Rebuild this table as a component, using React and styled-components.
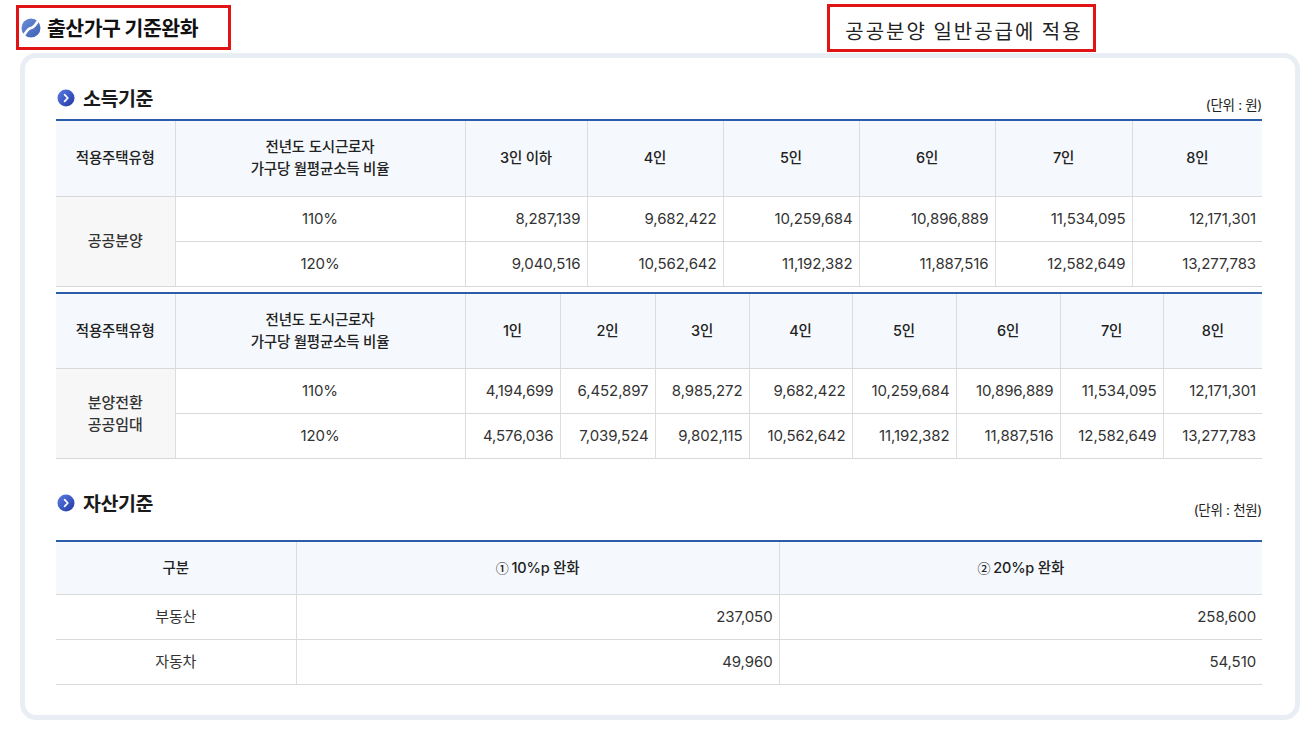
import React from "react";
import styled, { createGlobalStyle } from "styled-components";

const Global = createGlobalStyle`
  html, body { margin: 0; padding: 0; background: #fff; }
  body { font-family: "Inter", "Noto Sans CJK KR", sans-serif; color: #222; }
  * { box-sizing: border-box; }
`;

const Page = styled.div`
  width: 1313px;
  height: 731px;
  overflow: hidden;
`;

const TopBar = styled.div`
  display: flex;
  align-items: flex-start;
  height: 53px;
  padding-left: 16px;
`;

const TitleBox = styled.div`
  margin-top: 5px;
  width: 215px;
  height: 45px;
  border: 3px solid #e01414;
  display: flex;
  align-items: center;
  gap: 6px;
  padding-left: 2px;
`;

const TitleText = styled.h1`
  margin: 0;
  font-family: "Noto Sans CJK KR", sans-serif;
  font-size: 20.5px;
  font-weight: 700;
  letter-spacing: -0.5px;
  color: #111;
  line-height: 26px;
  padding-bottom: 2px;
`;

const NoteBox = styled.div`
  margin-top: 4px;
  margin-left: 596px;
  width: 269px;
  height: 48px;
  border: 3px solid #e01414;
  display: flex;
  align-items: center;
  justify-content: center;
  padding-top: 5px;
  padding-left: 5px;
  font-family: "Noto Sans CJK KR", sans-serif;
  font-size: 20px;
  font-weight: 400;
  letter-spacing: 2px;
  color: #222;
`;

const Card = styled.div`
  margin-left: 20px;
  width: 1280px;
  height: 667px;
  border: 5px solid #e9edf4;
  border-radius: 16px;
  background: #fff;
  padding: 28px 33px 31px 31px;
`;

const SectionHead = styled.div`
  display: flex;
  justify-content: space-between;
  align-items: flex-start;
  height: 28px;
  margin-top: ${(p) => p.$mt || 0}px;
  margin-bottom: ${(p) => p.$mb || 0}px;
`;

const SectionTitle = styled.h2`
  margin: 0;
  display: flex;
  align-items: center;
  gap: 8px;
  font-family: "Noto Sans CJK KR", sans-serif;
  font-size: 19.5px;
  font-weight: 700;
  letter-spacing: -0.4px;
  line-height: 24px;
  color: #1a1a1a;
  margin-left: 1px;
`;

const Unit = styled.span`
  margin-top: 10px;
  font-size: 13.5px;
  line-height: 18px;
  color: #222;
  letter-spacing: -0.3px;
`;

const Table = styled.table`
  width: 1206px;
  table-layout: fixed;
  border-collapse: collapse;
  border-top: 2px solid #2b5dab;
  margin-top: ${(p) => p.$mt || 0}px;
`;

const Th = styled.th`
  height: ${(p) => p.$h || 76}px;
  background: #f5f9fd;
  font-size: 14.5px;
  font-weight: 500;
  color: #222;
  line-height: 22px;
  text-align: center;
  border-bottom: 1px solid #d9d9d9;
  border-right: 1px solid #dddddd;
  padding: 0 4px;
  letter-spacing: -0.2px;
  &:last-child { border-right: none; }
`;

const Td = styled.td`
  height: 45px;
  font-size: 15px;
  color: #333;
  text-align: ${(p) => p.$align || "right"};
  padding: 0 ${(p) => (p.$align === "center" ? 4 : 6)}px 0 4px;
  border-bottom: 1px solid #d9d9d9;
  border-right: 1px solid #dddddd;
  background: ${(p) => (p.$gray ? "#f7f7f7" : "#fff")};
  line-height: 22px;
  letter-spacing: -0.1px;
  font-weight: ${(p) => (p.$head ? 500 : 400)};
  &:last-child { border-right: none; }
`;

const Circled = styled.span`
  font-family: "Noto Sans CJK KR", sans-serif;
  font-size: 13px;
  margin-right: 3px;
`;

const TitleIcon = () => (
  <svg width="20" height="20" viewBox="0 0 20 20">
    <defs>
      <linearGradient id="tg" x1="0" y1="0" x2="1" y2="1">
        <stop offset="0" stopColor="#6d8ed6" />
        <stop offset="1" stopColor="#3c5fb3" />
      </linearGradient>
    </defs>
    <circle cx="10" cy="10" r="9.5" fill="url(#tg)" />
    <path
      d="M3.5 16.5 C 6 12.5, 7 10.5, 10 10 C 13 9.5, 14 7.5, 16.5 3.5"
      stroke="#fff"
      strokeWidth="2.6"
      fill="none"
      strokeLinecap="round"
    />
  </svg>
);

const BulletIcon = () => (
  <svg width="18" height="18" viewBox="0 0 18 18">
    <defs>
      <linearGradient id="bg" x1="0" y1="0" x2="1" y2="1">
        <stop offset="0" stopColor="#5a7ee6" />
        <stop offset="1" stopColor="#2236a3" />
      </linearGradient>
    </defs>
    <circle cx="9" cy="9" r="8.5" fill="url(#bg)" />
    <path d="M7.6 5.6 L10.8 9 L7.6 12.4" stroke="#fff" strokeWidth="1.8" fill="none" strokeLinecap="round" strokeLinejoin="round" />
  </svg>
);

const RATIO = (
  <>
    전년도 도시근로자
    <br />
    가구당 월평균소득 비율
  </>
);

const t1 = {
  cols: [119, 290, 122, 136, 136, 136, 137, 130],
  heads: ["3인 이하", "4인", "5인", "6인", "7인", "8인"],
  label: ["공공분양"],
  rows: [
    ["110%", "8,287,139", "9,682,422", "10,259,684", "10,896,889", "11,534,095", "12,171,301"],
    ["120%", "9,040,516", "10,562,642", "11,192,382", "11,887,516", "12,582,649", "13,277,783"],
  ],
};

const t2 = {
  cols: [119, 290, 95, 95, 94, 103, 104, 104, 103, 99],
  heads: ["1인", "2인", "3인", "4인", "5인", "6인", "7인", "8인"],
  label: ["분양전환", "공공임대"],
  rows: [
    ["110%", "4,194,699", "6,452,897", "8,985,272", "9,682,422", "10,259,684", "10,896,889", "11,534,095", "12,171,301"],
    ["120%", "4,576,036", "7,039,524", "9,802,115", "10,562,642", "11,192,382", "11,887,516", "12,582,649", "13,277,783"],
  ],
};

const IncomeTable = ({ data, mt }) => (
  <Table $mt={mt}>
    <colgroup>
      {data.cols.map((w, i) => (
        <col key={i} style={{ width: w }} />
      ))}
    </colgroup>
    <thead>
      <tr>
        <Th>적용주택유형</Th>
        <Th>{RATIO}</Th>
        {data.heads.map((h) => (
          <Th key={h}>{h}</Th>
        ))}
      </tr>
    </thead>
    <tbody>
      {data.rows.map((r, ri) => (
        <tr key={ri}>
          {ri === 0 && (
            <Td rowSpan={2} $align="center" $gray $head>
              {data.label.map((l, i) => (
                <React.Fragment key={i}>
                  {i > 0 && <br />}
                  {l}
                </React.Fragment>
              ))}
            </Td>
          )}
          {r.map((v, ci) => (
            <Td key={ci} $align={ci === 0 ? "center" : "right"}>
              {v}
            </Td>
          ))}
        </tr>
      ))}
    </tbody>
  </Table>
);

export default function App() {
  return (
    <Page>
      <Global />
      <TopBar>
        <TitleBox>
          <TitleIcon />
          <TitleText>출산가구 기준완화</TitleText>
        </TitleBox>
        <NoteBox>공공분양 일반공급에 적용</NoteBox>
      </TopBar>
      <Card>
        <SectionHead $mb={5}>
          <SectionTitle>
            <BulletIcon />
            소득기준
          </SectionTitle>
          <Unit>(단위 : 원)</Unit>
        </SectionHead>
        <IncomeTable data={t1} />
        <IncomeTable data={t2} mt={5} />
        <SectionHead $mt={32} $mb={21}>
          <SectionTitle>
            <BulletIcon />
            자산기준
          </SectionTitle>
          <Unit>(단위 : 천원)</Unit>
        </SectionHead>
        <Table>
          <colgroup>
            <col style={{ width: 240 }} />
            <col style={{ width: 483 }} />
            <col style={{ width: 483 }} />
          </colgroup>
          <thead>
            <tr>
              <Th $h={53}>구분</Th>
              <Th $h={53}>
                <Circled>①</Circled>10%p 완화
              </Th>
              <Th $h={53}>
                <Circled>②</Circled>20%p 완화
              </Th>
            </tr>
          </thead>
          <tbody>
            <tr>
              <Td $align="center">부동산</Td>
              <Td>237,050</Td>
              <Td>258,600</Td>
            </tr>
            <tr>
              <Td $align="center">자동차</Td>
              <Td>49,960</Td>
              <Td>54,510</Td>
            </tr>
          </tbody>
        </Table>
      </Card>
    </Page>
  );
}
